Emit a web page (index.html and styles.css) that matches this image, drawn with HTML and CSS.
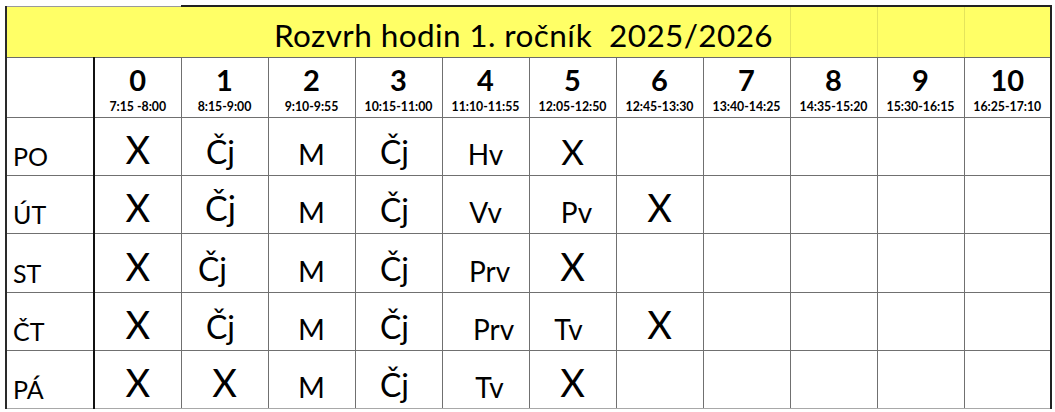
FILE: index.html
```html
<!DOCTYPE html>
<html lang="cs">
<head>
<meta charset="utf-8">
<title>Rozvrh hodin 1. ročník 2025/2026</title>
<link rel="stylesheet" href="styles.css">
</head>
<body>
<table class="schedule">
  <colgroup>
    <col class="col-day">
    <col span="11">
  </colgroup>
  <tr class="title-row">
    <td colspan="2" class="t-a"></td>
    <td colspan="7" class="t-b">Rozvrh hodin 1. ročník  2025/2026</td>
    <td class="t-c"></td>
    <td class="t-c"></td>
    <td class="t-c"></td>
  </tr>
  <tr class="head-row">
    <td class="day"></td>
    <td class="hd"><div class="hd-in"><span class="num">0</span><span class="time">7:15 -8:00</span></div></td>
    <td class="hd"><div class="hd-in"><span class="num">1</span><span class="time">8:15-9:00</span></div></td>
    <td class="hd"><div class="hd-in"><span class="num">2</span><span class="time">9:10-9:55</span></div></td>
    <td class="hd"><div class="hd-in"><span class="num">3</span><span class="time">10:15-11:00</span></div></td>
    <td class="hd"><div class="hd-in"><span class="num">4</span><span class="time">11:10-11:55</span></div></td>
    <td class="hd"><div class="hd-in"><span class="num">5</span><span class="time">12:05-12:50</span></div></td>
    <td class="hd"><div class="hd-in"><span class="num">6</span><span class="time">12:45-13:30</span></div></td>
    <td class="hd"><div class="hd-in"><span class="num">7</span><span class="time">13:40-14:25</span></div></td>
    <td class="hd"><div class="hd-in"><span class="num">8</span><span class="time">14:35-15:20</span></div></td>
    <td class="hd"><div class="hd-in"><span class="num">9</span><span class="time">15:30-16:15</span></div></td>
    <td class="hd"><div class="hd-in"><span class="num">10</span><span class="time">16:25-17:10</span></div></td>
  </tr>
  <tr class="row">
    <td class="day">PO</td>
    <td class="c x">X</td>
    <td class="c cj">Čj</td>
    <td class="c m">M</td>
    <td class="c cj">Čj</td>
    <td class="c">Hv</td>
    <td class="c xs">X</td>
    <td class="c"></td><td class="c"></td><td class="c"></td><td class="c"></td><td class="c"></td>
  </tr>
  <tr class="row">
    <td class="day">ÚT</td>
    <td class="c x">X</td>
    <td class="c cj big">Čj</td>
    <td class="c m">M</td>
    <td class="c cj">Čj</td>
    <td class="c">Vv</td>
    <td class="c r4">Pv</td>
    <td class="c x">X</td>
    <td class="c"></td><td class="c"></td><td class="c"></td><td class="c"></td>
  </tr>
  <tr class="row">
    <td class="day">ST</td>
    <td class="c x">X</td>
    <td class="c cj l12">Čj</td>
    <td class="c m">M</td>
    <td class="c cj">Čj</td>
    <td class="c r4">Prv</td>
    <td class="c x">X</td>
    <td class="c"></td><td class="c"></td><td class="c"></td><td class="c"></td><td class="c"></td>
  </tr>
  <tr class="row">
    <td class="day">ČT</td>
    <td class="c x">X</td>
    <td class="c cj">Čj</td>
    <td class="c m">M</td>
    <td class="c cj">Čj</td>
    <td class="c r8">Prv</td>
    <td class="c l4">Tv</td>
    <td class="c x">X</td>
    <td class="c"></td><td class="c"></td><td class="c"></td><td class="c"></td>
  </tr>
  <tr class="row">
    <td class="day">PÁ</td>
    <td class="c x">X</td>
    <td class="c x">X</td>
    <td class="c m">M</td>
    <td class="c cj">Čj</td>
    <td class="c r4">Tv</td>
    <td class="c x">X</td>
    <td class="c"></td><td class="c"></td><td class="c"></td><td class="c"></td><td class="c"></td>
  </tr>
</table>
</body>
</html>
```

FILE: styles.css
```css
html, body {
  margin: 0;
  padding: 0;
  background: #ffffff;
}

body {
  font-family: Lato, "Open Sans", "Liberation Sans", sans-serif;
  color: #000;
}

.schedule {
  border-collapse: collapse;
  table-layout: fixed;
  width: 1047px;
  margin: 5px 0 0 5px;
  border-left: 2px solid #2a2a2a;
  border-right: 2px solid #222;
}

.col-day {
  width: 88px;
}

.schedule td {
  padding: 0;
  border: 1px solid #707070;
}

/* title band */
.title-row {
  height: 51px;
}

.title-row td {
  background: #ffff66;
  vertical-align: bottom;
  border-bottom: 1px solid #6a6a6a;
}

.t-a {
  border-top: 1px solid #9a9a9a !important;
  border-left: 2px solid #2a2a2a !important;
  border-right: none !important;
}

.t-b {
  border-top: 2px solid #222 !important;
  border-left: none !important;
  border-right: 1px solid #e4e45c !important;
  font-size: 31.5px;
  letter-spacing: 0.4px;
  line-height: 1;
  white-space: pre;
  text-align: left;
  padding: 0 0 5px 93px !important;
}

.t-c {
  border-top: 2px solid #222 !important;
  border-left: 1px solid #e4e45c !important;
  border-right: 1px solid #e4e45c !important;
}

.t-c:last-child {
  border-right: 2px solid #222 !important;
}

/* header row */
.head-row {
  height: 60px;
}

.head-row td {
  vertical-align: bottom;
}

.hd-in {
  display: flex;
  flex-direction: column;
  align-items: center;
  padding-bottom: 3px;
}

.num {
  font-weight: 700;
  font-size: 29px;
  line-height: 1;
  margin-bottom: 7px;
}

.time {
  font-weight: 700;
  font-size: 12.3px;
  line-height: 1;
  white-space: nowrap;
}

/* day column */
.schedule td.day {
  border-left: 2px solid #2a2a2a;
  border-right: 2px solid #111;
  font-size: 25px;
  line-height: 1;
  vertical-align: bottom;
  text-align: left;
  padding: 0 0 6px 6px;
}

.schedule tr > td:last-child {
  border-right: 2px solid #222;
}

.row:last-child td {
  border-bottom: 1px solid #a8a8a8;
}

/* lesson cells */
.row {
  height: 58.4px;
}

.c {
  font-size: 28px;
  line-height: 1;
  text-align: center;
  vertical-align: bottom;
  padding-bottom: 7px !important;
}

.c.m {
  font-size: 29px;
}

.c.x {
  font-size: 38px;
  padding-bottom: 7px !important;
}

.c.xs {
  font-size: 35px;
  padding-bottom: 6px !important;
}

.c.cj {
  font-size: 32px;
  padding-right: 8px !important;
}

.c.cj.big {
  font-size: 34px;
  padding-bottom: 8px !important;
}

.c.l12 {
  padding-right: 24px !important;
}

.c.l4 {
  padding-right: 8px !important;
}

.c.r4 {
  padding-left: 8px !important;
}

.c.r8 {
  padding-left: 16px !important;
}
```
